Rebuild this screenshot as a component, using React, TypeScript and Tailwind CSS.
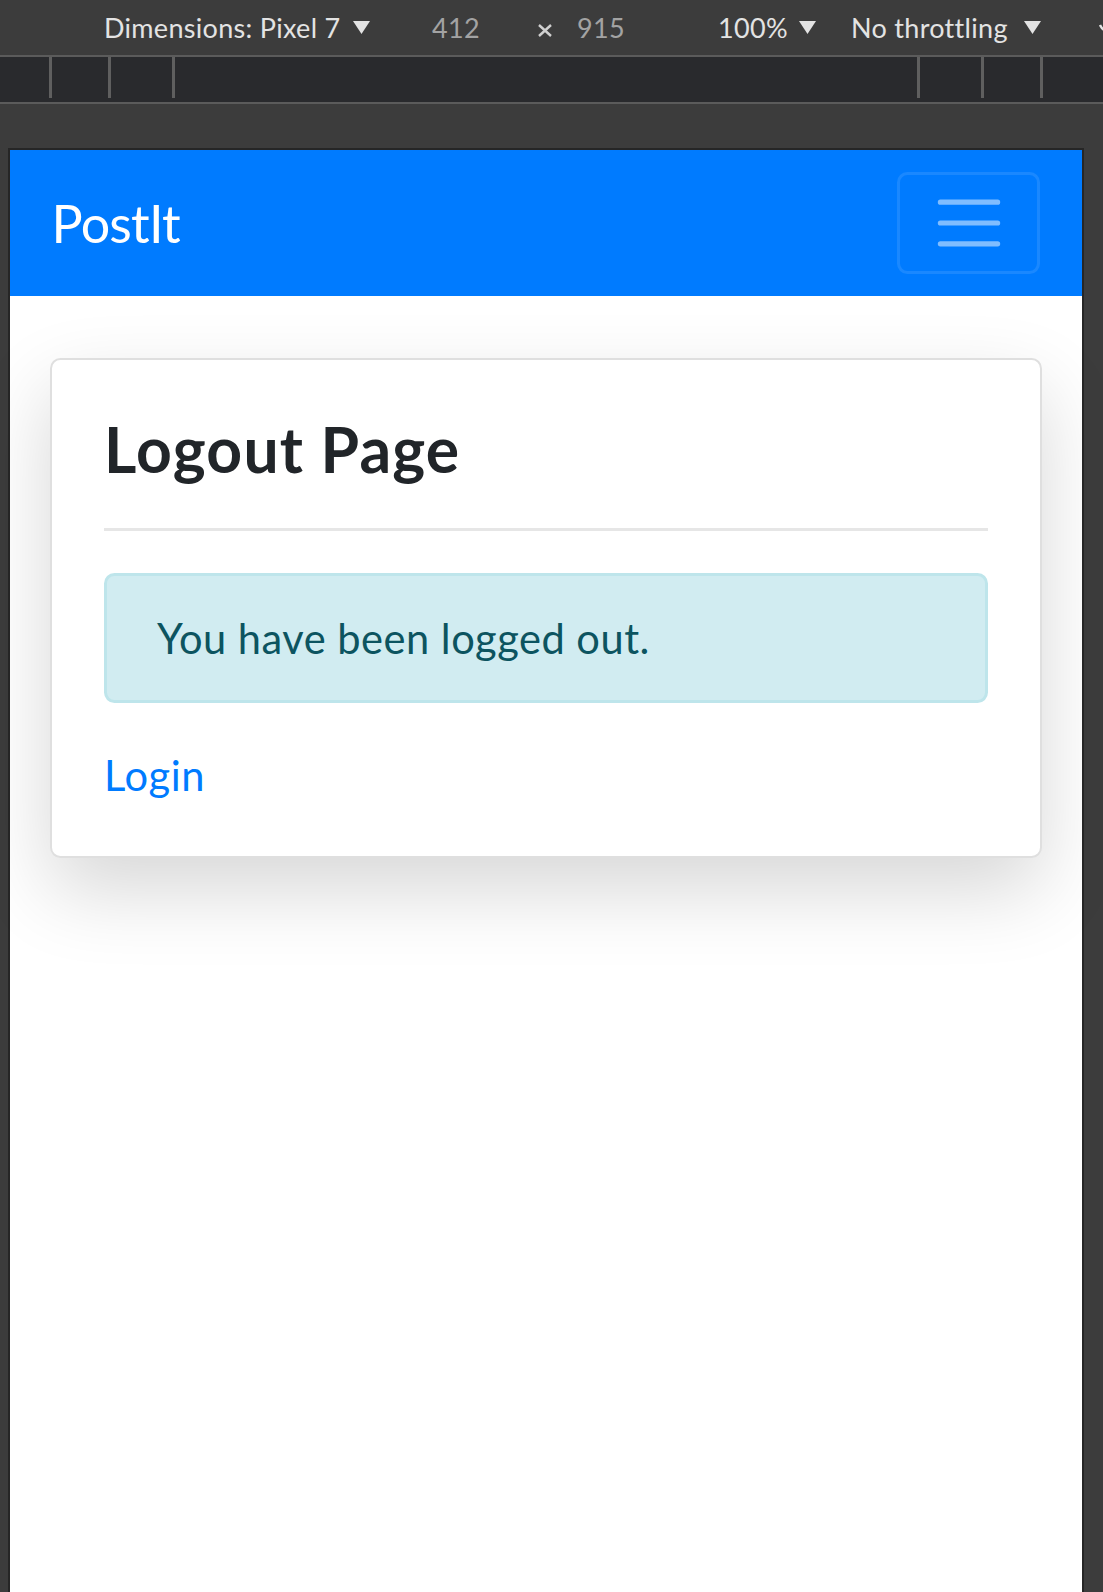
import React from 'react';

const Caret = () => (
  <svg width="17" height="13" viewBox="0 0 17 13" className="shrink-0">
    <polygon points="0,0 17,0 8.5,13" fill="#e3e3e3" />
  </svg>
);

function DevToolbar() {
  return (
    <div className="flex flex-col shrink-0">
      {/* device toolbar */}
      <div className="h-[55px] bg-[#3c3c3c] flex items-center text-[27px] text-[#e3e3e3] leading-none tracking-[0.3px]" style={{ fontFamily: 'Lato, sans-serif' }}>
        <div className="w-[104px] shrink-0" />
        <div className="w-[249px] shrink-0">Dimensions: Pixel 7</div>
        <Caret />
        <div className="w-[62px] shrink-0" />
        <div className="w-[105px] shrink-0 text-[#a3a3a3]">412</div>
        <div className="w-[40px] shrink-0 flex items-center">
          <svg width="16" height="13" viewBox="0 0 16 13" className="mt-[5px]">
            <path d="M2 1L14 12M14 1L2 12" stroke="#d0d0d0" strokeWidth="2.4" />
          </svg>
        </div>
        <div className="w-[141px] shrink-0 text-[#a3a3a3]">915</div>
        <div className="w-[81px] shrink-0">100%</div>
        <Caret />
        <div className="w-[35px] shrink-0" />
        <div className="w-[173px] shrink-0">No throttling</div>
        <Caret />
        <div className="w-[57px] shrink-0" />
        <svg width="14" height="14" viewBox="0 0 14 14" className="shrink-0">
          <path d="M2 4 Q7 14 12 4" stroke="#e3e3e3" strokeWidth="2.5" fill="none" />
        </svg>
      </div>
      <div className="h-[2px] bg-[#5b5b5b]" />
      {/* ruler */}
      <div className="h-[45px] bg-[#292a2d] flex items-start">
        <div className="w-[49px] shrink-0" />
        <div className="w-[3px] h-[41px] bg-[#5f5f5f] shrink-0" />
        <div className="w-[56px] shrink-0" />
        <div className="w-[3px] h-[41px] bg-[#5f5f5f] shrink-0" />
        <div className="w-[61px] shrink-0" />
        <div className="w-[3px] h-[41px] bg-[#5f5f5f] shrink-0" />
        <div className="w-[742px] shrink-0" />
        <div className="w-[3px] h-[41px] bg-[#5f5f5f] shrink-0" />
        <div className="w-[61px] shrink-0" />
        <div className="w-[3px] h-[41px] bg-[#5f5f5f] shrink-0" />
        <div className="w-[56px] shrink-0" />
        <div className="w-[3px] h-[41px] bg-[#5f5f5f] shrink-0" />
      </div>
      <div className="h-[2px] bg-[#5b5b5b]" />
      <div className="h-[44px] bg-[#3c3c3c]" />
    </div>
  );
}

function Navbar() {
  return (
    <nav className="h-[146px] bg-[#007bff] flex items-center justify-between px-[41.6px] shrink-0">
      <a className="text-[52px] leading-[78px] text-white tracking-[-0.8px]">PostIt</a>
      <button className="w-[143px] h-[102px] border-[3px] border-white/10 rounded-[10.4px] flex items-center justify-center">
        <svg width="78" height="78" viewBox="0 0 30 30">
          <path
            d="M4 7h22M4 15h22M4 23h22"
            stroke="rgba(255,255,255,0.5)"
            strokeWidth="2"
            strokeLinecap="round"
            strokeMiterlimit="10"
          />
        </svg>
      </button>
    </nav>
  );
}

export default function App() {
  return (
    <div className="w-[1103px] h-[1592px] overflow-hidden bg-[#3c3c3c] flex flex-col">
      <DevToolbar />
      {/* emulated device viewport */}
      <div className="flex-1 ml-[8px] w-[1076px] border-t-2 border-l-2 border-r-2 border-[#262626] bg-white flex flex-col" style={{ fontFamily: 'Lato, sans-serif' }}>
        <Navbar />
        <main className="px-[40px] pt-[62px]">
          <div className="bg-white border-2 border-[#dfdfdf] rounded-[10.4px] shadow-[0_32px_80px_rgba(0,0,0,0.16)] px-[52px] pt-[52px] pb-[49px]">
            <h4 className="text-[62.4px] leading-[1.2] font-bold tracking-[1.2px] text-[#212529] mb-[41.6px]">Logout Page</h4>
            <hr className="border-0 border-t-[3px] border-[#e6e6e6] mb-[41.6px]" />
            <div className="bg-[#d1ecf1] border-[3px] border-[#bee5eb] text-[#0c5460] rounded-[10.4px] px-[50px] py-[30.6px] text-[41.6px] leading-[1.5] tracking-[0.5px] mb-[41.6px]">
              You have been logged out.
            </div>
            <a className="block text-[41.6px] leading-[1.5] tracking-[0.6px] text-[#007bff]">Login</a>
          </div>
        </main>
      </div>
    </div>
  );
}
